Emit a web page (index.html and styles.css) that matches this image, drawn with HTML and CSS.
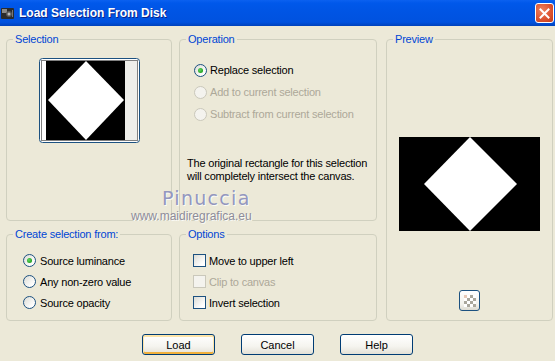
FILE: index.html
```html
<!DOCTYPE html>
<html lang="en">
<head>
    <meta charset="utf-8">
    <title>Load Selection From Disk</title>
    <link rel="stylesheet" href="styles.css">
</head>
<body>
    <div class="window">
        <div class="titlebar">
            <svg class="app-icon" width="13" height="13" viewBox="0 0 13 13">
                <rect x="0" y="1" width="13" height="11" rx="1" fill="#2b2b2b"/>
                <rect x="1" y="2" width="5" height="4" fill="#8a8a8a"/>
                <circle cx="8" cy="7" r="3" fill="#555"/>
                <circle cx="8" cy="7" r="1.5" fill="#bbb"/>
                <rect x="11" y="3" width="1" height="7" fill="#777"/>
            </svg>
            <span class="title">Load Selection From Disk</span>
            <span class="close-btn">
                <svg width="11" height="11" viewBox="0 0 11 11">
                    <path d="M1.5 1.5 L9.5 9.5 M9.5 1.5 L1.5 9.5" stroke="#fff" stroke-width="2" stroke-linecap="square"/>
                </svg>
            </span>
        </div>

        <div class="dialog">
            <div class="groups">
                <fieldset class="group group-selection">
                    <legend>Selection</legend>
                    <div class="thumb">
                        <svg width="101" height="85" viewBox="0 0 101 85">
                            <rect x="0.5" y="0.5" width="100" height="84" rx="3" fill="#fff" stroke="#1c5180"/>
                            <rect x="7" y="3" width="79" height="79" fill="#000"/>
                            <rect x="86" y="3" width="12" height="79" fill="#eeeeea"/>
                            <polygon points="47,3 85,42 47,82 9,42" fill="#fff"/>
                            <rect x="2.5" y="2.5" width="96" height="80" fill="none" stroke="#000" stroke-dasharray="1 1"/>
                        </svg>
                    </div>
                </fieldset>

                <fieldset class="group group-operation">
                    <legend>Operation</legend>
                    <div class="option-list">
                        <div class="option"><span class="radio checked"></span>Replace selection</div>
                        <div class="option disabled"><span class="radio"></span>Add to current selection</div>
                        <div class="option disabled"><span class="radio"></span>Subtract from current selection</div>
                    </div>
                    <p class="note">The original rectangle for this selection<br>will completely intersect the canvas.</p>
                </fieldset>

                <fieldset class="group group-preview">
                    <legend>Preview</legend>
                    <div class="preview-img">
                        <svg width="141" height="94" viewBox="0 0 141 94">
                            <rect width="141" height="94" fill="#000"/>
                            <polygon points="71,0 118,47 71,94 25,47" fill="#fff"/>
                        </svg>
                    </div>
                    <span class="icon-btn">
                        <svg width="12" height="12" viewBox="0 0 12 12">
                            <rect width="12" height="12" fill="#fff"/>
                            <rect x="0" y="0" width="3" height="3" fill="#e6c9b8"/>
                            <rect x="6" y="0" width="3" height="3" fill="#aaa79c"/>
                            <rect x="3" y="3" width="3" height="3" fill="#aaa79c"/>
                            <rect x="9" y="3" width="3" height="3" fill="#aaa79c"/>
                            <rect x="0" y="6" width="3" height="3" fill="#aaa79c"/>
                            <rect x="6" y="6" width="3" height="3" fill="#aaa79c"/>
                            <rect x="3" y="9" width="3" height="3" fill="#aaa79c"/>
                            <rect x="9" y="9" width="3" height="3" fill="#aaa79c"/>
                        </svg>
                    </span>
                </fieldset>

                <fieldset class="group group-source">
                    <legend>Create selection from:</legend>
                    <div class="option-list">
                        <div class="option"><span class="radio checked"></span>Source luminance</div>
                        <div class="option"><span class="radio"></span>Any non-zero value</div>
                        <div class="option"><span class="radio"></span>Source opacity</div>
                    </div>
                </fieldset>

                <fieldset class="group group-options">
                    <legend>Options</legend>
                    <div class="option-list">
                        <div class="option"><span class="check"></span>Move to upper left</div>
                        <div class="option disabled"><span class="check"></span>Clip to canvas</div>
                        <div class="option"><span class="check"></span>Invert selection</div>
                    </div>
                </fieldset>
            </div>

            <div class="buttons">
                <button class="btn btn-default">Load</button>
                <button class="btn">Cancel</button>
                <button class="btn">Help</button>
            </div>
        </div>

        <div class="watermark">
            <div class="wm-name">Pinuccia</div>
            <div class="wm-site">www.maidiregrafica.eu</div>
        </div>
    </div>
</body>
</html>
```

FILE: styles.css
```css
* {
    box-sizing: border-box;
}

body {
    margin: 0;
    background: #ece9d8;
    font-family: "Liberation Sans", Arial, sans-serif;
    font-size: 11px;
    letter-spacing: -0.2px;
    color: #000;
    overflow: hidden;
}

.window {
    position: relative;
    width: 555px;
    height: 361px;
}

/* title bar */
.titlebar {
    height: 26px;
    display: flex;
    align-items: center;
    padding: 0 1px 0 1px;
    background: linear-gradient(#0b61f0 0%, #0058ea 12%, #0054e3 50%, #0052df 85%, #0042bb 100%);
    color: #fff;
}

.app-icon {
    display: block;
    margin-top: 1px;
}

.title {
    flex: 1;
    margin-left: 5px;
    font-size: 12px;
    font-weight: bold;
    letter-spacing: 0;
    text-shadow: 1px 1px 0 #0a248a;
}

.close-btn {
    width: 19px;
    height: 20px;
    display: flex;
    align-items: center;
    justify-content: center;
    border: 1px solid #fff;
    border-radius: 3px;
    background: radial-gradient(circle at 35% 35%, #ee8260 0%, #dd5432 55%, #c13a18 100%);
}

/* body */
.dialog {
    padding: 7px 0 0 6px;
}

.groups {
    display: grid;
    grid-template-columns: 166px 198px 169px;
    grid-template-rows: 188px 93px;
    column-gap: 7px;
    row-gap: 7px;
}

.group {
    margin: 0;
    padding: 0;
    min-width: 0;
    border: 1px solid #d0d0bf;
    border-radius: 4px;
}

.group legend {
    margin-left: 6px;
    padding: 0 2px;
    line-height: 13px;
    color: #0046d5;
}

.group-preview {
    grid-column: 3;
    grid-row: 1 / span 2;
    margin-left: 2px;
    display: flex;
    flex-direction: column;
    align-items: center;
}

.group-source {
    grid-column: 1;
    grid-row: 2;
}

.group-options {
    grid-column: 2;
    grid-row: 2;
}

.thumb {
    width: 101px;
    margin: 12px auto 0;
}

.thumb svg,
.preview-img svg {
    display: block;
}

.preview-img {
    margin-top: 91px;
}

.icon-btn {
    width: 21px;
    height: 21px;
    margin-top: 59px;
    display: flex;
    align-items: center;
    justify-content: center;
    border: 1px solid #1c5180;
    border-radius: 3px;
    background: linear-gradient(#fff, #f3f2ec 70%, #dcdad0);
}

/* radios and checkboxes */
.option-list {
    padding: 13px 0 0 14px;
}

.option {
    display: flex;
    align-items: center;
    gap: 3px;
    height: 22px;
}

.group-source .option-list {
    padding: 9px 0 0 16px;
}

.group-source .option {
    height: 21px;
    gap: 4px;
}

.group-options .option-list {
    padding: 9px 0 0 13px;
}

.group-options .option {
    height: 21px;
}

.radio {
    position: relative;
    width: 13px;
    height: 13px;
    border: 1px solid #1c5180;
    border-radius: 50%;
    background: linear-gradient(135deg, #dcdcd5, #fff 80%);
}

.radio.checked::after {
    content: "";
    position: absolute;
    left: 3px;
    top: 3px;
    width: 5px;
    height: 5px;
    border-radius: 50%;
    background: radial-gradient(circle at 40% 40%, #62d862, #21a121 70%);
}

.check {
    width: 13px;
    height: 13px;
    border: 1px solid #1c5180;
    background: linear-gradient(135deg, #dcdcd5, #fff 80%);
}

.option.disabled {
    color: #aca899;
}

.option.disabled .radio,
.option.disabled .check {
    border-color: #cac8bb;
    background: #f4f3ee;
}

.note {
    margin: 32px 0 0 7px;
    line-height: 13px;
}

/* buttons */
.buttons {
    display: flex;
    justify-content: center;
    gap: 26px;
    margin-top: 13px;
    padding-right: 6px;
}

.btn {
    width: 73px;
    height: 21px;
    padding: 0;
    border: 1px solid #003c74;
    border-radius: 3px;
    background: linear-gradient(#fff, #f5f4ef 60%, #e3e1d6);
    font-family: inherit;
    font-size: 11px;
    color: #000;
}

.btn-default {
    box-shadow: inset 0 1px 0 1px #fde4a8, inset 0 -1px 0 1px #f0b03c;
}

/* watermark */
.watermark {
    position: absolute;
    left: 131px;
    top: 187px;
    color: #9397bf;
    text-shadow: 1px 1px 0 #fbfbf6;
}

.wm-name {
    margin-left: 31px;
    font-family: "DejaVu Sans", sans-serif;
    font-size: 19px;
    letter-spacing: 1.3px;
    line-height: 23px;
}

.wm-site {
    font-size: 12px;
    line-height: 12px;
    letter-spacing: 0;
    color: #8d8c9a;
}
```
